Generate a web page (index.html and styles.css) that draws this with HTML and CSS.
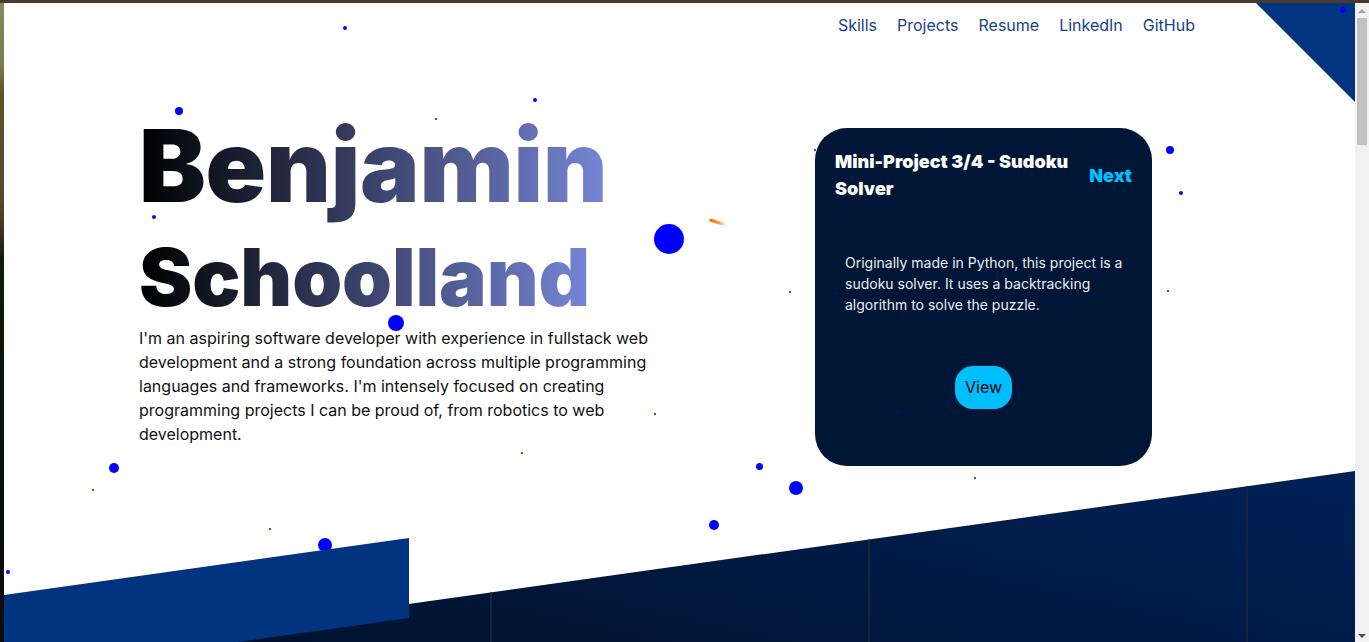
FILE: index.html
```html
<!DOCTYPE html>
<html lang="en">
<head>
<meta charset="utf-8">
<title>Benjamin Schoolland</title>
<link rel="stylesheet" href="styles.css">
</head>
<body>
<div class="window">
  <div class="topbar"></div>
  <div class="frame">
    <div class="leftstrip"></div>
    <div class="page">
      <div class="corner"></div>
      <nav class="nav">
        <a href="#skills">Skills</a>
        <a href="#projects">Projects</a>
        <a href="#resume">Resume</a>
        <a href="#linkedin">LinkedIn</a>
        <a href="#github">GitHub</a>
      </nav>
      <section class="hero">
        <div class="intro">
          <h1 class="name">
            <span class="first">Benjamin</span>
            <span class="last">Schoolland</span>
          </h1>
          <p class="bio">I'm an aspiring software developer with experience in fullstack web development and a strong foundation across multiple programming languages and frameworks. I'm intensely focused on creating programming projects I can be proud of, from robotics to web development.</p>
        </div>
        <div class="card">
          <div class="card-head">
            <h2 class="card-title">Mini-Project 3/4 - Sudoku Solver</h2>
            <a class="next" href="#next">Next</a>
          </div>
          <p class="card-desc">Originally made in Python, this project is a sudoku solver. It uses a backtracking algorithm to solve the puzzle.</p>
          <button class="view">View</button>
        </div>
      </section>
      <div class="particles">
        <span class="dot" style="left:339px;top:23px;width:4px;height:4px"></span>
        <span class="dot" style="left:171px;top:104px;width:8px;height:8px"></span>
        <span class="dot" style="left:529px;top:95px;width:4px;height:4px"></span>
        <span class="dot" style="left:431px;top:115px;width:2px;height:2px"></span>
        <span class="dot" style="left:222px;top:151px;width:2px;height:2px"></span>
        <span class="dot" style="left:148px;top:212px;width:4px;height:4px"></span>
        <span class="dot" style="left:650px;top:221px;width:30px;height:30px"></span>
        <span class="dot" style="left:384px;top:312px;width:16px;height:16px"></span>
        <span class="dot" style="left:1162px;top:143px;width:8px;height:8px"></span>
        <span class="dot" style="left:1175px;top:188px;width:4px;height:4px"></span>
        <span class="dot" style="left:785px;top:288px;width:2px;height:2px"></span>
        <span class="dot" style="left:830px;top:289px;width:2px;height:2px"></span>
        <span class="dot" style="left:1163px;top:287px;width:2px;height:2px"></span>
        <span class="dot" style="left:810px;top:146px;width:2px;height:2px"></span>
        <span class="dot" style="left:893px;top:408px;width:2px;height:2px"></span>
        <span class="dot" style="left:970px;top:474px;width:2px;height:2px"></span>
        <span class="dot" style="left:650px;top:410px;width:2px;height:2px"></span>
        <span class="dot" style="left:517px;top:449px;width:2px;height:2px"></span>
        <span class="dot" style="left:105px;top:460px;width:10px;height:10px"></span>
        <span class="dot" style="left:88px;top:486px;width:2px;height:2px"></span>
        <span class="dot" style="left:265px;top:525px;width:2px;height:2px"></span>
        <span class="dot" style="left:314px;top:535px;width:14px;height:14px"></span>
        <span class="dot" style="left:752px;top:460px;width:7px;height:7px"></span>
        <span class="dot" style="left:785px;top:478px;width:14px;height:14px"></span>
        <span class="dot" style="left:705px;top:517px;width:10px;height:10px"></span>
        <span class="dot" style="left:2px;top:567px;width:4px;height:4px"></span>
        <span class="dot" style="left:1336px;top:4px;width:6px;height:6px"></span>
        <span class="streak"></span>
      </div>
      <section class="skills">
        <div class="col"></div>
        <div class="col"></div>
        <div class="col"></div>
        <div class="col"></div>
      </section>
      <div class="slab"></div>
    </div>
    <div class="scrollbar">
      <span class="arrow up"></span>
      <span class="thumb"></span>
      <span class="arrow down"></span>
    </div>
  </div>
</div>
</body>
</html>
```

FILE: styles.css
```css
* { box-sizing: border-box; }

html, body {
  margin: 0;
  padding: 0;
  width: 1369px;
  height: 642px;
  overflow: hidden;
  background: #ffffff;
  font-family: "Inter", "Noto Sans", sans-serif;
}

.window {
  display: flex;
  flex-direction: column;
  width: 1369px;
  height: 642px;
}

.topbar {
  height: 3px;
  background: #4a3a2d;
  flex: none;
}

.frame {
  display: flex;
  flex: 1;
  min-height: 0;
}

.leftstrip {
  width: 4px;
  flex: none;
  background: linear-gradient(to bottom, #86885a 0%, #7a7b50 10%, #5e522f 14%, #574a29 30%, #4a3f23 34%, #141a12 40%, #0b100c 60%, #080b09 100%);
}

.page {
  position: relative;
  width: 1351px;
  flex: none;
  overflow: hidden;
  background: #ffffff;
}

.corner {
  position: absolute;
  top: 0;
  right: 0;
  width: 99px;
  height: 99px;
  background: #02357f;
  clip-path: polygon(0 0, 100% 0, 100% 100%);
}

.nav {
  display: flex;
  justify-content: flex-end;
  gap: 20px;
  padding: 10px 160px 0 0;
  height: 34px;
}

.nav a {
  color: #163f8c;
  text-decoration: none;
  font-size: 16px;
  line-height: 24px;
}

.hero {
  display: flex;
  align-items: flex-start;
  padding: 0 203px 0 135px;
  height: 432px;
}

.intro {
  width: 520px;
  padding-top: 68px;
}

.name {
  margin: 0;
  font-weight: 900;
  display: flex;
  flex-direction: column;
  align-items: flex-start;
}

.name span {
  display: inline-block;
  background: linear-gradient(90deg, #000000, #7686d6);
  -webkit-background-clip: text;
  background-clip: text;
  color: transparent;
}

.first {
  font-size: 100px;
  line-height: 121px;
  letter-spacing: -0.25px;
}

.last {
  font-size: 80px;
  line-height: 101px;
  letter-spacing: -0.1px;
}

.bio {
  margin: -1px 0 0;
  font-size: 16px;
  line-height: 24px;
  color: #111111;
}

.card {
  margin-left: auto;
  margin-top: 91px;
  width: 337px;
  height: 338px;
  border-radius: 32px;
  background: #001636;
  padding: 20px;
  display: flex;
  flex-direction: column;
}

.card-head {
  display: flex;
  justify-content: space-between;
  align-items: center;
  gap: 12px;
}

.card-title {
  margin: 0;
  color: #ffffff;
  font-size: 18px;
  line-height: 27px;
  font-weight: 900;
}

.next {
  color: #00bfff;
  text-decoration: none;
  font-weight: 900;
  font-size: 18px;
  line-height: 27px;
}

.card-desc {
  margin: 50px 0 0;
  padding: 0 0 0 10px;
  color: #eceef2;
  font-size: 14px;
  line-height: 21px;
}

.view {
  align-self: center;
  margin-top: 51px;
  border: none;
  background: #00bfff;
  color: #000000;
  font-family: inherit;
  font-size: 16px;
  line-height: 19px;
  padding: 12px 10px;
  border-radius: 18px;
}

.particles {
  position: absolute;
  inset: 0;
  pointer-events: none;
  z-index: 2;
}

.dot {
  position: absolute;
  border-radius: 50%;
  background: #0000ff;
}

.streak {
  position: absolute;
  left: 705px;
  top: 218px;
  width: 18px;
  height: 3px;
  border-radius: 2px;
  background: linear-gradient(90deg, #f06a00, #ff9a40 55%, rgba(255, 200, 180, 0));
  transform: rotate(17deg);
}

.skills {
  display: flex;
  padding-left: 108px;
  height: 300px;
  background: linear-gradient(to top right, #000c22 0%, #001536 45%, #00225a 100%);
  clip-path: polygon(0 192px, 100% 2px, 100% 100%, 0 100%);
  position: relative;
  z-index: 1;
}

.col {
  width: 378px;
  flex: none;
  border-left: 2px solid #15243f;
}

.slab {
  position: absolute;
  left: 0;
  top: 535px;
  width: 405px;
  height: 140px;
  background: #02337f;
  clip-path: polygon(0 57px, 100% 0, 100% 80px, 0 137px);
  z-index: 3;
}

.scrollbar {
  width: 14px;
  flex: none;
  background: #f1f1f1;
  display: flex;
  flex-direction: column;
  align-items: center;
  position: relative;
}

.arrow {
  width: 0;
  height: 0;
  border-left: 4px solid transparent;
  border-right: 4px solid transparent;
}

.arrow.up {
  margin-top: 6px;
  border-bottom: 4px solid #a3a3a3;
}

.arrow.down {
  margin-top: auto;
  margin-bottom: 4px;
  border-top: 4px solid #505050;
}

.thumb {
  margin-top: 5px;
  width: 10px;
  height: 127px;
  background: #c1c1c1;
}
```
